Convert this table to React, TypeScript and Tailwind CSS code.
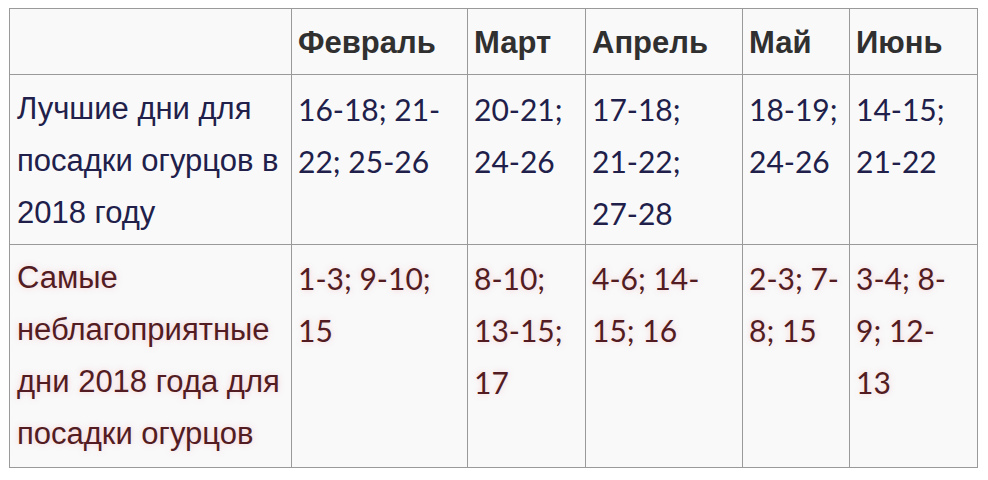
import React from "react";

const months = ["Февраль", "Март", "Апрель", "Май", "Июнь"];

const best: string[][] = [
  ["16-18; 21-", "22; 25-26"],
  ["20-21;", "24-26"],
  ["17-18;", "21-22;", "27-28"],
  ["18-19;", "24-26"],
  ["14-15;", "21-22"],
];

const worst: string[][] = [
  ["1-3; 9-10;", "15"],
  ["8-10;", "13-15;", "17"],
  ["4-6; 14-", "15; 16"],
  ["2-3; 7-", "8; 15"],
  ["3-4; 8-", "9; 12-", "13"],
];

const widths = ["w-[282px]", "w-[176px]", "w-[118px]", "w-[157px]", "w-[107px]", "w-[128px]"];

function Lines({ lines }: { lines: string[] }) {
  return (
    <>
      {lines.map((l, i) => (
        <div key={i} className="whitespace-nowrap">
          {l}
        </div>
      ))}
    </>
  );
}

export default function App() {
  return (
    <div className="w-[988px] h-[480px] bg-white pt-[8px] pl-[9px]">
      <table className="table-fixed border-collapse bg-[#f9f9f9]">
        <colgroup>
          {widths.map((w, i) => (
            <col key={i} className={w} />
          ))}
        </colgroup>
        <tbody>
          <tr className="h-[66px]">
            <td className="border border-[#9a9a9a]"></td>
            {months.map((m) => (
              <td
                key={m}
                className="border border-[#9a9a9a] px-[6px] pt-[4px] align-middle font-['Liberation_Sans',sans-serif] font-bold text-[31px] text-[#303030]"
              >
                {m}
              </td>
            ))}
          </tr>
          <tr className="h-[170px]">
            <td className="border border-[#9a9a9a] px-[7px] pt-[8px] align-top font-['Liberation_Sans',sans-serif] text-[31px] leading-[52px] text-[#20204a]">
              <Lines lines={["Лучшие дни для", "посадки огурцов в", "2018 году"]} />
            </td>
            {best.map((b, i) => (
              <td
                key={i}
                className="border border-[#9a9a9a] px-[6px] pt-[8px] align-top font-['Lato',sans-serif] text-[30px] leading-[52px] text-[#20204a]"
              >
                <Lines lines={b} />
              </td>
            ))}
          </tr>
          <tr className="h-[223px]">
            <td className="border border-[#9a9a9a] px-[7px] pt-[7px] align-top font-['Liberation_Sans',sans-serif] text-[31px] leading-[52px] text-[#521c22] [text-shadow:0_0_6px_rgba(240,120,140,0.35)]">
              <Lines lines={["Самые", "неблагоприятные", "дни 2018 года для", "посадки огурцов"]} />
            </td>
            {worst.map((w, i) => (
              <td
                key={i}
                className="border border-[#9a9a9a] px-[6px] pt-[7px] align-top font-['Lato',sans-serif] text-[30px] leading-[52px] text-[#521c22] [text-shadow:0_0_6px_rgba(240,120,140,0.35)]"
              >
                <Lines lines={w} />
              </td>
            ))}
          </tr>
        </tbody>
      </table>
    </div>
  );
}
